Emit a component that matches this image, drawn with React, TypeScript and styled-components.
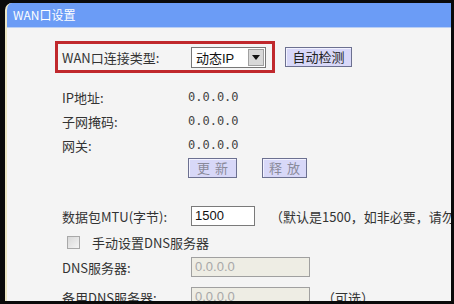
import React from 'react';
import styled, { createGlobalStyle } from 'styled-components';

const GlobalStyle = createGlobalStyle`
  html, body {
    margin: 0;
    padding: 0;
    background: #0a0a0a;
    overflow: hidden;
  }
  body {
    font-family: "SimSun", "Noto Sans CJK SC", "DejaVu Sans", sans-serif;
  }
`;

const Screen = styled.div`
  width: 454px;
  height: 304px;
  padding: 3px 3px 3px 5px;
  box-sizing: border-box;
  background: #0a0a0a;
`;

const Panel = styled.div`
  height: 298px;
  background: #f4f4f4;
  border-left: 2px solid #ece6c4;
  border-top-left-radius: 7px;
  overflow: hidden;
  display: flex;
  flex-direction: column;
`;

const TitleBar = styled.div`
  height: 24px;
  flex-shrink: 0;
  background: #6b9cf6;
  border-bottom: 1px solid #b9cff5;
  color: #ffffff;
  font-size: 12px;
  line-height: 24px;
  padding-left: 6px;
`;

const Body = styled.div`
  padding: 13px 0 0 48px;
  display: flex;
  flex-direction: column;
  color: #333;
  font-size: 13px;
`;

const TypeRow = styled.div`
  display: flex;
  align-items: center;
  gap: 10px;
`;

const Highlight = styled.div`
  width: 210px;
  height: 26px;
  border: 3px solid #c0282c;
  display: flex;
  align-items: center;
  padding-left: 4px;
`;

const Label = styled.span<{ $w?: number }>`
  width: ${({ $w }) => ($w ?? 124)}px;
  flex-shrink: 0;
  color: #333;
  white-space: nowrap;
`;

const Select = styled.div`
  width: 69px;
  height: 19px;
  border: 1px solid #777;
  background: #fff;
  display: flex;
  align-items: center;
  justify-content: space-between;
  margin-left: 4px;
  font-family: "Liberation Sans", "Noto Sans CJK SC", sans-serif;
  font-size: 13px;
  color: #111;
  padding-left: 4px;
  box-sizing: content-box;
`;

const Arrow = styled.span`
  width: 16px;
  height: 17px;
  margin-right: 1px;
  background: #d8d8d8;
  border: 1px solid #a0a0a0;
  box-sizing: border-box;
  display: flex;
  align-items: center;
  justify-content: center;
`;

const Button = styled.button<{ $disabled?: boolean; $w: number }>`
  width: ${({ $w }) => $w}px;
  height: 20px;
  padding: 0;
  background: #d8d8f8;
  border: 1px solid #6c7090;
  box-shadow: inset 1px 1px 0 #f2f2ff;
  color: ${({ $disabled }) => ($disabled ? '#8a8a9a' : '#222')};
  letter-spacing: ${({ $disabled }) => ($disabled ? '5px' : '0')};
  text-indent: ${({ $disabled }) => ($disabled ? '5px' : '0')};
  font-family: "Noto Sans CJK SC", sans-serif;
  font-size: 13px;
  line-height: 18px;
`;

const InfoRows = styled.div`
  margin-top: 12px;
  padding-left: 7px;
  display: flex;
  flex-direction: column;
`;

const Row = styled.div<{ $h: number }>`
  height: ${({ $h }) => $h}px;
  display: flex;
  align-items: center;
`;

const Value = styled.span`
  font-family: "DejaVu Sans Mono", monospace;
  font-size: 12px;
  color: #444;
  margin-left: 2px;
`;

const Buttons = styled.div`
  display: flex;
  gap: 25px;
  margin-left: 126px;
  margin-top: 1px;
`;

const Input = styled.div<{ $w: number; $disabled?: boolean }>`
  width: ${({ $w }) => $w}px;
  height: 20px;
  margin-left: 5px;
  box-sizing: border-box;
  border: 1px solid ${({ $disabled }) => ($disabled ? '#a0a0a0' : '#7a7a7a')};
  background: ${({ $disabled }) => ($disabled ? '#eeede4' : '#ffffff')};
  color: ${({ $disabled }) => ($disabled ? '#a8a8a8' : '#111')};
  font-family: "Liberation Sans", sans-serif;
  font-size: 13px;
  line-height: 18px;
  padding-left: 3px;
  flex-shrink: 0;
`;

const Note = styled.span`
  margin-left: 15px;
  white-space: nowrap;
  color: #333;
`;

const CheckRow = styled.div`
  height: 24px;
  display: flex;
  align-items: center;
  margin-top: 4px;
  padding-left: 5px;
`;

const Check = styled.span`
  width: 11px;
  height: 11px;
  border: 1px solid #a8a8a8;
  background: linear-gradient(135deg, #d8d8d8, #f4f4f4);
  margin-right: 12px;
`;

export default function App() {
  return (
    <>
      <GlobalStyle />
      <Screen>
        <Panel>
          <TitleBar>WAN口设置</TitleBar>
          <Body>
            <TypeRow>
              <Highlight>
                <Label $w={125}>WAN口连接类型:</Label>
                <Select>
                  动态IP
                  <Arrow>
                    <svg width="8" height="5" viewBox="0 0 8 5">
                      <path d="M0 0h8L4 5z" fill="#111" />
                    </svg>
                  </Arrow>
                </Select>
              </Highlight>
              <Button $w={67}>自动检测</Button>
            </TypeRow>
            <InfoRows>
              <Row $h={24}>
                <Label>IP地址:</Label>
                <Value>0.0.0.0</Value>
              </Row>
              <Row $h={24}>
                <Label>子网掩码:</Label>
                <Value>0.0.0.0</Value>
              </Row>
              <Row $h={24}>
                <Label>网关:</Label>
                <Value>0.0.0.0</Value>
              </Row>
              <Buttons>
                <Button $w={49} $disabled>更新</Button>
                <Button $w={45} $disabled>释放</Button>
              </Buttons>
              <Row $h={20} style={{ marginTop: 28 }}>
                <Label>数据包MTU(字节):</Label>
                <Input $w={64}>1500</Input>
                <Note>（默认是1500，如非必要，请勿修改）</Note>
              </Row>
              <CheckRow>
                <Check />
                手动设置DNS服务器
              </CheckRow>
              <Row $h={20} style={{ marginTop: 3 }}>
                <Label>DNS服务器:</Label>
                <Input $w={119} $disabled>0.0.0.0</Input>
              </Row>
              <Row $h={20} style={{ marginTop: 10 }}>
                <Label>备用DNS服务器:</Label>
                <Input $w={119} $disabled>0.0.0.0</Input>
                <Note style={{ marginLeft: 12 }}>（可选）</Note>
              </Row>
            </InfoRows>
          </Body>
        </Panel>
      </Screen>
    </>
  );
}
